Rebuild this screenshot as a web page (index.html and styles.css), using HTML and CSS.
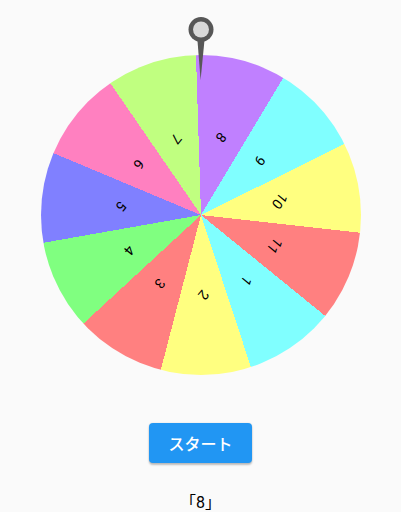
FILE: index.html
```html
<!DOCTYPE html>
<html lang="ja">
<head>
    <meta charset="UTF-8">
    <meta name="viewport" content="width=device-width, initial-scale=1.0">
    <title>ルーレット</title>
    <link rel="stylesheet" href="styles.css">
</head>
<body>
    <div class="stage">
        <div class="wheel">
            <span class="label" style="--a: 16.36deg">1</span>
            <span class="label" style="--a: 49.09deg">2</span>
            <span class="label" style="--a: 81.82deg">3</span>
            <span class="label" style="--a: 114.55deg">4</span>
            <span class="label" style="--a: 147.27deg">5</span>
            <span class="label" style="--a: 180deg">6</span>
            <span class="label" style="--a: 212.73deg">7</span>
            <span class="label" style="--a: 245.45deg">8</span>
            <span class="label" style="--a: 278.18deg">9</span>
            <span class="label" style="--a: 310.91deg">10</span>
            <span class="label" style="--a: 343.64deg">11</span>
        </div>
        <svg class="pointer" width="30" height="70" viewBox="0 0 30 70">
            <circle cx="15" cy="16.5" r="12.5" fill="#575757"/>
            <polygon points="11.2,24 18.8,24 14.6,67" fill="#575757"/>
            <circle cx="15" cy="16.5" r="8" fill="#d9d9d9"/>
        </svg>
    </div>
    <button class="start">スタート</button>
    <p class="result">「8」</p>
</body>
</html>
```

FILE: styles.css
```css
body{
    margin: 0;
    background: #fafafa;
    font-family: Roboto, "Noto Sans CJK JP", sans-serif;
}

.stage{
    position: relative;
    width: 320px;
    height: 320px;
    margin: 55px auto 0;
}

/* wheel stopped after spinning 129.1deg */
.wheel{
    --spin: 129.1deg;
    position: relative;
    width: 320px;
    height: 320px;
    border-radius: 50%;
    background: conic-gradient(
        from var(--spin),
        #80ffff 0deg 32.727deg,
        #ffff80 32.727deg 65.455deg,
        #ff8080 65.455deg 98.182deg,
        #80ff80 98.182deg 130.909deg,
        #8080ff 130.909deg 163.636deg,
        #ff80c0 163.636deg 196.364deg,
        #c0ff80 196.364deg 229.091deg,
        #c080ff 229.091deg 261.818deg,
        #80ffff 261.818deg 294.545deg,
        #ffff80 294.545deg 327.273deg,
        #ff8080 327.273deg 360deg
    );
}

.label{
    position: absolute;
    left: 50%;
    top: 50%;
    font-size: 14px;
    line-height: 16px;
    color: #000;
    transform: translate(-50%, -50%) rotate(calc(var(--a) + var(--spin))) translateY(-80px) rotate(calc(-1 * var(--a)));
}

.pointer{
    position: absolute;
    left: 145.5px;
    top: -42px;
}

.start{
    display: block;
    margin: 48px auto 0;
    height: 40px;
    padding: 0 19px;
    border: none;
    border-radius: 4px;
    background: #2196f3;
    color: #fff;
    font-family: "Noto Sans CJK JP", sans-serif;
    font-size: 16px;
    font-weight: 500;
    box-shadow: 0 2px 2px rgba(0,0,0,0.24), 0 0 2px rgba(0,0,0,0.12);
}

.result{
    margin: 30px 0 0;
    font-size: 16px;
    line-height: 20px;
    text-align: center;
    color: #000;
}
```
